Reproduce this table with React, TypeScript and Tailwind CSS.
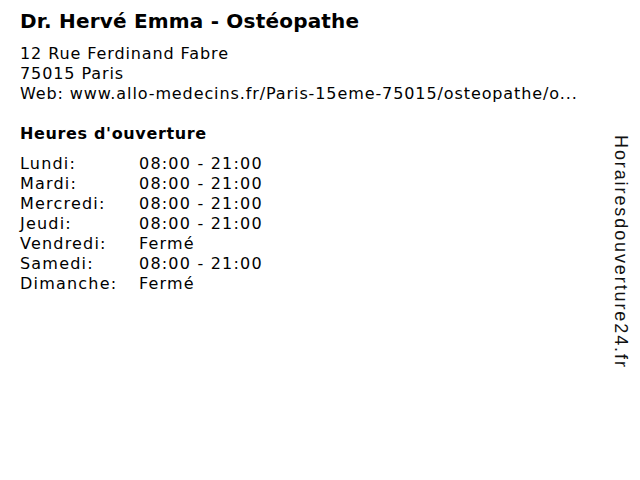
const hours: [string, string][] = [
  ['Lundi:', '08:00 - 21:00'],
  ['Mardi:', '08:00 - 21:00'],
  ['Mercredi:', '08:00 - 21:00'],
  ['Jeudi:', '08:00 - 21:00'],
  ['Vendredi:', 'Fermé'],
  ['Samedi:', '08:00 - 21:00'],
  ['Dimanche:', 'Fermé'],
];

export default function App() {
  return (
    <div className="flex h-[480px] w-[640px] bg-white text-black font-['DejaVu_Sans',sans-serif]">
      <div className="flex-1 pl-5 pt-[9px]">
        <h1 className="text-[20px] font-bold leading-6 tracking-[0.2px]">Dr. Hervé Emma - Ostéopathe</h1>
        <div className="mt-[11px] text-[16px] leading-5 tracking-[0.9px]">
          <div>12 Rue Ferdinand Fabre</div>
          <div>75015 Paris</div>
          <div>Web: www.allo-medecins.fr/Paris-15eme-75015/osteopathe/o...</div>
        </div>
        <h2 className="mt-[20px] text-[16px] font-bold leading-5 tracking-[0.65px]">Heures d'ouverture</h2>
        <div className="mt-[10px] text-[16px] leading-5 tracking-[1.2px]">
          {hours.map(([day, time]) => (
            <div key={day} className="flex">
              <span className="w-[119px] shrink-0">{day}</span>
              <span>{time}</span>
            </div>
          ))}
        </div>
      </div>
      <div className="flex w-[29px] items-start pt-[135px]">
        <span className="text-[18px] leading-5 tracking-[1.9px] text-[#111] font-['Liberation_Sans',sans-serif] [writing-mode:vertical-rl]">
          Horairesdouverture24.fr
        </span>
      </div>
    </div>
  );
}
